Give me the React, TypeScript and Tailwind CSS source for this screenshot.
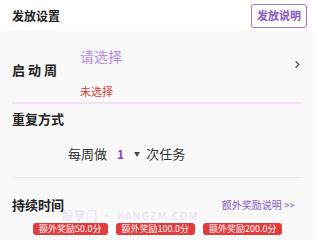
import React from 'react';
import { ChevronRight } from 'lucide-react';

const font = { fontFamily: '"Noto Sans CJK SC", "Noto Sans", sans-serif' };

const Badge = ({ text }: { text: string }) => (
  <span className="h-[12px] px-[6px] rounded-[3px] bg-[#e23b3b] text-white text-[9px] leading-[12px] whitespace-nowrap">
    {text}
  </span>
);

const App = () => {
  return (
    <div className="w-[319px] h-[240px] bg-white overflow-hidden relative" style={font}>
      {/* header */}
      <div className="h-[31px] flex items-center justify-between pl-[12px] pr-[12px]">
        <span className="text-[12px] font-bold text-[#222] leading-none">发放设置</span>
        <button className="h-[24px] px-[5px] border-[1.5px] border-[#a07ad6] rounded-[3px] text-[11px] font-bold text-[#8657c4] leading-none">
          发放说明
        </button>
      </div>

      <div className="w-[313px] bg-[#f9f9f9] h-[209px]">
        {/* 启动周 */}
        <div className="h-[71px] flex items-center pl-[12px] pr-[10px]">
          <span className="w-[68px] text-[13px] font-bold text-[#222] tracking-[3px] mt-[6px]">启动周</span>
          <div className="flex-1 flex flex-col h-full pt-[15px]">
            <span className="text-[14px] text-[#b48ce6] leading-[20px]">请选择</span>
            <span className="text-[11px] text-[#d8413f] leading-[14px] mt-[18px]">未选择</span>
          </div>
          <ChevronRight size={11} strokeWidth={3} className="text-[#555] mb-[4px]" />
        </div>
        <div className="mx-[12px] h-[2px] bg-[#f1e3f3]" />

        {/* 重复方式 */}
        <div className="h-[73px] pl-[12px] pt-[6px]">
          <div className="text-[13px] font-bold text-[#222] leading-[18px]">重复方式</div>
          <div className="flex items-center pl-[56px] mt-[17px] text-[13px] text-[#333] leading-[18px]">
            <span>每周做</span>
            <span className="ml-[10px] text-[#8a3fd1] font-bold text-[12px]">1</span>
            <span className="ml-[10px] text-[6px] text-[#444]">▼</span>
            <span className="ml-[6px]">次任务</span>
          </div>
        </div>
        <div className="mx-[12px] h-[1px] bg-[#e8e6f0]" />

        {/* 持续时间 */}
        <div className="pl-[12px] pr-[18px] pt-[18px] flex items-center justify-between">
          <span className="text-[13px] font-bold text-[#222] leading-[18px]">持续时间</span>
          <span className="text-[10px] text-[#8657c4] leading-[14px]">额外奖励说明 &gt;&gt;</span>
        </div>
        <div className="flex gap-[8px] pl-[33px] mt-[9px]">
          <Badge text="额外奖励50.0分" />
          <Badge text="额外奖励100.0分" />
          <Badge text="额外奖励200.0分" />
        </div>
      </div>

      {/* watermark */}
      <div className="absolute left-[62px] top-[210px] text-[11px] leading-[11px] text-[#c9b8ee] opacity-40 tracking-[1px] pointer-events-none">
        殷掌门 • KANGZM.COM
      </div>
    </div>
  );
};

export default App;
